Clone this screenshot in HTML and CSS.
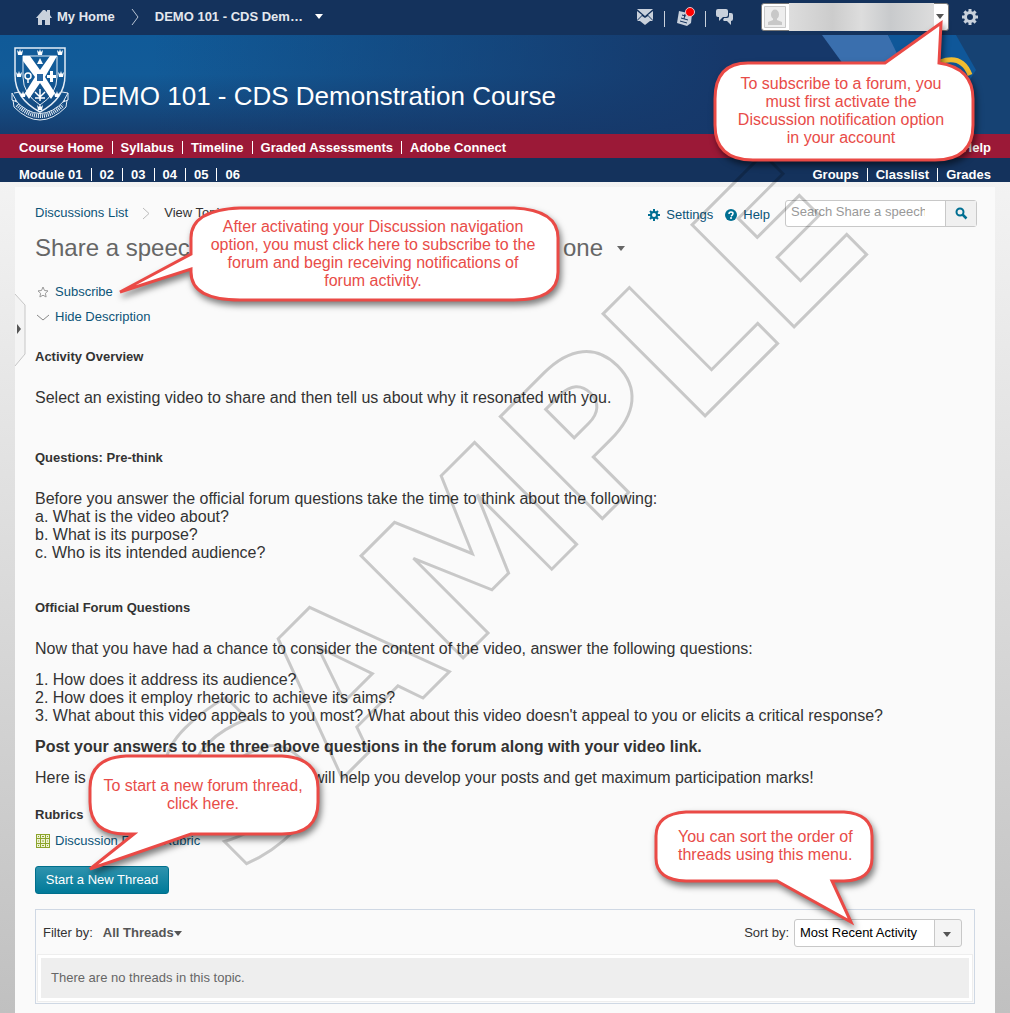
FILE: index.html
```html
<!DOCTYPE html>
<html lang="en">
<head>
<meta charset="utf-8">
<meta name="viewport" content="width=device-width, initial-scale=1">
<title>DEMO 101 - CDS Demonstration Course</title>
<link rel="stylesheet" href="styles.css">
</head>
<body>
<header>
  <div class="minibar">
    <nav class="crumbs" aria-label="Site">
      <a class="home" href="#"><svg width="16" height="16" viewBox="0 0 16 16"><path fill="#c9d1dc" d="M0 9 7 1h2l2 2V1h3v5l2 3h-2v7H9v-5H6v5H2V9z"/></svg>My Home</a>
      <svg width="8" height="18" viewBox="0 0 8 18"><path d="M1 1l6 8-6 8" fill="none" stroke="#b9c4d3"/></svg>
      <button class="course-pick" type="button">DEMO 101 - CDS Dem…<i class="caret"></i></button>
    </nav>
    <div class="tools">
      <button type="button" aria-label="Messages"><svg width="18" height="18" viewBox="0 0 18 18"><path fill="#c9d1dc" d="M1 1h16L9 8zM1 3l5 4-5 5zM17 3l-5 4 5 5zM9 10l3-2 5 5h-3l-5 4-5-4H1l5-5z"/></svg></button>
      <span class="bar"></span>
      <button type="button" aria-label="Updates"><svg width="20" height="20" viewBox="0 0 20 20"><path fill="#c9d1dc" d="M4 4l13 3-1 9-4 3-10-3z"/><path d="M6 11l7 2M5 14l7 2M7 8l4 1M10 7l-1 5" stroke="#14325c" fill="none"/><circle cx="15" cy="5" r="4.500" fill="#f00" stroke="#e8c8d0"/></svg></button>
      <span class="bar"></span>
      <button type="button" aria-label="Chat"><svg width="18" height="16" viewBox="0 0 18 16"><path fill="#c9d1dc" d="M2 0h8q2 0 2 2v4q0 2-2 2H7l-4 4V8H2Q0 8 0 6V2q0-2 2-2zM13 4h2q2 0 2 2v4q0 2-2 2v4l-4-4H8l-1-1 1-2h3q2 0 2-2z"/></svg></button>
      <button class="account" type="button" aria-label="Account">
        <svg width="22" height="22" viewBox="0 0 22 22"><path d="M.5.5h21v21H.5z" fill="#eee" stroke="#c8c8c8"/><ellipse cx="11" cy="8.500" rx="4" ry="5" fill="#c8c8c8"/><path d="M9 12h4v2l5 2v3H4v-3l5-2z" fill="#c8c8c8"/></svg>
        <span class="account-name"></span><i class="caret"></i>
      </button>
      <button type="button" aria-label="Settings"><svg width="16" height="16" viewBox="-8 -8 16 16"><g stroke="#c9d1dc" stroke-width="3"><path d="M0-8V8M-8 0H8M-5.600-5.600 5.600 5.600M-5.600 5.600 5.600-5.600"/></g><circle r="4.500" fill="#14325c" stroke="#c9d1dc" stroke-width="3"/></svg></button>
    </div>
  </div>
  <div class="banner">
    <svg class="banner-art" width="260" height="99" viewBox="0 0 260 99" aria-hidden="true"><path d="M200 0h60v99h-60z" fill="#164273"/><path d="M72 0h66l60 99h-54z" fill="#3a6fae"/><path d="M138 0h68l20 35-40 64z" fill="#0f5799"/><path d="M190 27q22-8 30 13" fill="none" stroke="#f2bd30" stroke-width="5"/></svg>
    <svg class="crest" width="58" height="74" viewBox="0 0 58 74" aria-label="Crest">
      <g fill="none" stroke="#e4edf6"><path d="M4 1h50v27q0 24-25 37Q4 52 4 28z" stroke-width="1.500"/><path d="M12 9h34v21q0 17-17 28Q12 47 12 30z"/><path d="M3 46l6-1M1 46l5 9-5-2zM57 46l-6-1M57 46l-5 9 5-2z"/><path d="M4 53q25 27 50 0M3 60q26 26 52 0l1-7M3 60l-1-7"/><path d="M6 58q23 22 46 0" stroke-width="4" stroke-dasharray="1 1"/></g>
      <path d="M12 9h7l10 14L39 9h7L34 30l10 16-4 6-11-16-11 16-4-6 10-16L12 14z" fill="#fff"/>
      <path d="M26 27h6v7h-6z" fill="#2a68a3"/>
      <path fill="#fff" d="M6 3l2 2 1-3 1 3 2-2-1 5H7zM26 3l2 2 1-3 1 3 2-2-1 5h-4zM46 3l2 2 1-3 1 3 2-2-1 5h-4zM5 25l2 2 1-3 1 3 2-2-1 5H6zM47 25l2 2 1-3 1 3 2-2-1 5h-4zM26 58l2 2 1-3 1 3 2-2-1 5h-4zM9 45l2 2 1-3 1 3 2-2-1 5h-4zM43 45l2 2 1-3 1 3 2-2-1 5h-4zM29 11l3 6h-6zM39 24h3v4h3v3h-3v4h-3v-4h-3v-3h3z"/>
      <g fill="none" stroke="#fff" stroke-width="1.500"><circle cx="17" cy="29" r="3"/><path d="M29 42v12M24 45l5 5 5-5M24 51h10M17 32v4"/></g>
    </svg>
    <span class="course-name">DEMO 101 - CDS Demonstration Course</span>
  </div>
  <nav class="navrow red" aria-label="Course">
    <ul><li><a href="#">Course Home</a></li><li><a href="#">Syllabus</a></li><li><a href="#">Timeline</a></li><li><a href="#">Graded Assessments</a></li><li><a href="#">Adobe Connect</a></li></ul>
    <ul><li><a href="#">Help</a></li></ul>
  </nav>
  <nav class="navrow navy" aria-label="Modules">
    <ul><li><a href="#">Module 01</a></li><li><a href="#">02</a></li><li><a href="#">03</a></li><li><a href="#">04</a></li><li><a href="#">05</a></li><li><a href="#">06</a></li></ul>
    <ul><li><a href="#">Groups</a></li><li><a href="#">Classlist</a></li><li><a href="#">Grades</a></li></ul>
  </nav>
</header>

<main>
  <button class="drawer" type="button" aria-label="Open panel"><svg width="12" height="74" viewBox="0 0 12 74"><path d="M0 1l10 11v49L0 73" fill="#f4f4f4" stroke="#c6c6c6"/><path d="M2 31l4 5-4 5z" fill="#555"/></svg></button>
  <div class="topline">
    <nav class="trail" aria-label="Breadcrumb"><a href="#">Discussions List</a><svg width="8" height="13" viewBox="0 0 8 13"><path d="M1 1l6 5.500L1 12" fill="none" stroke="#bbb"/></svg><span>View Topic</span></nav>
    <div class="page-tools">
      <a href="#"><svg width="12" height="12" viewBox="-6 -6 12 12"><path d="M0-6V6M-6 0H6M-4-4 4 4M-4 4 4-4" stroke="#006f92" stroke-width="2"/><circle r="3" fill="#fafafa" stroke="#006f92" stroke-width="2"/></svg>Settings</a>
      <a href="#"><svg width="12" height="12" viewBox="0 0 12 12"><circle cx="6" cy="6" r="6" fill="#006f92"/><path d="M4 5q0-2 2-2t2 1.500Q8 6 6 7M6 8v2" fill="none" stroke="#fff" stroke-width="1.500"/></svg>Help</a>
      <form class="search"><input type="text" aria-label="Search" placeholder="Search Share a speech"><button type="button" aria-label="Search"><svg width="12" height="12" viewBox="0 0 12 12"><circle cx="5" cy="5" r="3.500" fill="none" stroke="#006f92" stroke-width="2"/><path d="M7.500 7.500l4 4" stroke="#006f92" stroke-width="2.500"/></svg></button></form>
    </div>
  </div>
  <h1><span class="title">Share a speech</span><span>one</span><i class="caret"></i></h1>
  <ul class="actions">
    <li><svg width="12" height="12" viewBox="0 0 12 12"><path d="M6 1l1.500 3.500 3.500.4-2.600 2.400.7 3.700L6 9.200 2.900 11l.7-3.700L1 4.900l3.500-.4z" fill="none" stroke="#999"/></svg><a href="#">Subscribe</a></li>
    <li><svg width="12" height="12" viewBox="0 0 12 12"><path d="M0 4l6 5 6-5" fill="none" stroke="#888"/></svg><a href="#">Hide Description</a></li>
  </ul>

  <section class="description">
    <h2>Activity Overview</h2>
    <p class="wide">Select an existing video to share and then tell us about why it resonated with you.</p>
    <h2>Questions: Pre-think</h2>
    <p class="list">Before you answer the official forum questions take the time to think about the following:<br>a. What is the video about?<br>b. What is its purpose?<br>c. Who is its intended audience?</p>
    <h2>Official Forum Questions</h2>
    <p>Now that you have had a chance to consider the content of the video, answer the following questions:</p>
    <p>1. How does it address its audience?<br>2. How does it employ rhetoric to achieve its aims?<br>3. What about this video appeals to you most? What about this video doesn't appeal to you or elicits a critical response?</p>
    <p><strong>Post your answers to the three above questions in the forum along with your video link.</strong></p>
    <p class="tip"><span class="tip-start">Here is</span><span>will help you develop your posts and get maximum participation marks!</span></p>
  </section>
  <h2>Rubrics</h2>
  <p class="rubric"><svg width="14" height="14" viewBox="0 0 14 14"><path fill="#8ca42c" d="M0 0h14v14H0z"/><path fill="#eef2d6" d="M1 1h3v3H1zM5 1h4v3H5zM10 1h3v3h-3zM1 5h3v4H1zM5 5h4v4H5zM10 5h3v4h-3zM1 10h3v3H1zM5 10h4v3H5zM10 10h3v3h-3z"/><path stroke="#8ca42c" d="M2 2.500h1M6 2.500h2M11 2.500h1M2 7h1M6 7h2M11 7h1M2 11.500h1M6 11.500h2M11 11.500h1"/></svg><a href="#">Discussion Forum Rubric</a></p>
  <button class="primary" type="button">Start a New Thread</button>

  <section class="threads">
    <div class="filters">
      <div class="filter"><span>Filter by:</span><button type="button">All Threads<i class="caret"></i></button></div>
      <div class="sort"><label for="sort">Sort by:</label><span class="picker"><select id="sort"><option>Most Recent Activity</option></select><i class="caret"></i></span></div>
    </div>
    <p class="empty">There are no threads in this topic.</p>
  </section>
</main>

<svg class="watermark" width="780" height="920" viewBox="0 0 780 920" aria-hidden="true"><text transform="translate(121 880) rotate(-45)">SAMPLE</text></svg>

<aside class="callout c-account">
  <svg width="264" height="146" viewBox="0 0 264 146"><path d="M35 41H172L228 1L226 41Q260 46 260 77V103Q260 138 222 138H40Q2 138 2 103V77Q2 41 35 41z"/></svg>
  <p>To subscribe to a forum, you<br>must first activate the<br>Discussion notification option<br>in your account</p>
</aside>
<aside class="callout c-subscribe">
  <svg width="450" height="104" viewBox="0 0 450 104"><path d="M122 2H396Q440 4 440 32V66Q440 94 396 94H122Q73 94 73 66V63L2 86 73 48V32Q73 4 122 2z"/></svg>
  <p>After activating your Discussion navigation<br>option, you must click here to subscribe to the<br>forum and begin receiving notifications of<br>forum activity.</p>
</aside>
<aside class="callout c-start">
  <svg width="240" height="126" viewBox="0 0 240 126"><path d="M38 1H194Q230 3 230 33V47Q230 79 194 79H103L2 114 46 79H38Q2 79 2 47V33Q2 3 38 1z"/></svg>
  <p>To start a new forum thread,<br>click here.</p>
</aside>
<aside class="callout c-sort">
  <svg width="228" height="124" viewBox="0 0 228 124"><path d="M32 2H190Q218 4 218 26V48Q218 70 190 71H178L197 112 123 71H32Q2 70 2 48V26Q2 4 32 2z"/></svg>
  <p>You can sort the order of<br>threads using this menu.</p>
</aside>
</body>
</html>
```
FILE: styles.css
```css
* { box-sizing: border-box; }
body {
  position: relative;
  min-height: 100vh;
  margin: 0;
  display: flex;
  flex-direction: column;
  overflow-x: hidden;
  background: linear-gradient(#f3f3f3 180px, #c0c0c0);
  color: #333;
  font: 13px/18px "Liberation Sans", Arial, sans-serif;
}
a { color: #0c5478; text-decoration: none; }
button { margin: 0; padding: 0; border: 0; background: none; color: inherit; font: inherit; }
svg { flex: none; display: block; overflow: visible; }
ul { margin: 0; padding: 0; list-style: none; }
p { margin: 0; }
.caret { display: inline-block; border: 4px solid transparent; border-top: 5px solid currentColor; border-bottom: 0; }

.minibar {
  display: flex;
  justify-content: space-between;
  height: 35px;
  padding: 0 32px 2px 36px;
  background: #14325c;
  color: #e4e8ee;
  font-weight: bold;
}
.minibar a { color: inherit; }
.crumbs, .home, .course-pick, .tools, .account { display: flex; align-items: center; }
.crumbs { gap: 16px; }
.home { gap: 5px; }
.course-pick { gap: 12px; }
.course-pick .caret { color: #fff; }
.tools { gap: 10px; }
.bar { width: 1px; height: 16px; margin-top: 4px; background: #c9d1dc; }
.account {
  width: 188px;
  height: 28px;
  margin: 0 3px 0 17px;
  padding: 0 4px 0 2px;
  border: 1px solid #777;
  border-radius: 3px;
  background: #fff;
  color: #555;
}
.account-name { flex: 1; height: 28px; margin: 0 2px 0 3px; background: linear-gradient(90deg, #ddd, #ccc 30%, #ddd 50%, #c8cacc 70%, #ddd); }

.banner {
  position: relative;
  display: flex;
  gap: 13px;
  height: 99px;
  padding: 12px 11px;
  overflow: hidden;
  background: linear-gradient(90deg, transparent 15%, #16386a 72%), linear-gradient(#105a98, #125b98 40%, #163d6e);
}
.banner-art { position: absolute; top: 0; right: 0; width: 260px; }
.course-name { margin-top: 34px; color: #fff; font-size: 26px; line-height: 30px; }

.navrow { display: flex; justify-content: space-between; height: 24px; padding: 0 19px; font-weight: bold; }
.navrow ul { display: flex; align-items: center; }
.navrow li { padding-top: 4px; line-height: 16px; }
.navrow li + li::before { content: ""; display: inline-block; width: 1px; height: 13px; margin: 0 8px; background: #fff; vertical-align: -2px; }
.navrow a { color: #fff; }
.red { background: #9b1937; }
.navy { padding-top: 5px; background: #14325c; }

main { position: relative; flex: 1; margin: 5px 15px 0; padding: 12px 18px 10px 20px; background: #fafafa; }
.drawer { position: absolute; left: 0; top: 106px; }
.topline { display: flex; justify-content: space-between; }
.trail { display: flex; align-items: center; gap: 14px; height: 28px; }
.page-tools, .page-tools > a { display: flex; align-items: center; }
.page-tools { gap: 12px; }
.page-tools > a { gap: 6px; padding-top: 4px; }
.search { display: flex; width: 192px; height: 27px; margin-left: 3px; border: 1px solid #c8c8c8; border-radius: 3px; background: #fff; }
.search input { flex: 1; min-width: 0; padding: 0 20px 2px 5px; border: 0; background: none; font: inherit; }
.search input::placeholder { color: #999; opacity: 1; }
.search button { display: grid; place-items: center; width: 31px; border-left: 1px solid #c8c8c8; background: #f0f0f0; }

h1 { display: flex; align-items: center; margin: 7px 0 0; color: #666; font-size: 24px; font-weight: normal; line-height: 28px; }
.title { width: 528px; }
h1 .caret { margin-left: 14px; }
.actions { margin: 17px 0 19px; }
.actions li { display: flex; align-items: center; gap: 6px; height: 25px; padding-left: 2px; }

h2 { margin: 0; font-size: 13px; line-height: 18px; }
.description { font-size: 16px; }
.description p { margin-bottom: 13px; }
.description h2 + p { margin-top: 23px; }
.description .wide { margin-bottom: 42px; }
.description .list { margin-bottom: 37px; }
.description .tip { display: flex; margin-bottom: 19px; }
.tip-start { width: 278px; }
.rubric { display: flex; align-items: center; gap: 6px; margin: 8px 0 16px; }
.primary {
  width: 134px;
  height: 28px;
  border: 1px solid #006f8c;
  border-radius: 3px;
  background: linear-gradient(#2f93ae, #007a99);
  color: #fff;
}

.rubric { padding-left: 1px; gap: 5px; }
.threads { margin: 15px 2px 0 0; border: 1px solid #cfd8e4; }
.filters, .filter, .sort { display: flex; align-items: center; }
.filters { justify-content: space-between; height: 45px; padding: 0 12px 0 7px; }
.filter { gap: 10px; }
.filter button { color: #555; font-weight: bold; }
.filter .caret { vertical-align: 1px; }
.sort { gap: 5px; }
.picker { position: relative; width: 168px; height: 28px; border: 1px solid #c8c8c8; border-radius: 3px; background: linear-gradient(90deg, #fff 139px, #c8c8c8 139px, #c8c8c8 140px, #f4f4f4 140px); }
.picker select { width: 100%; height: 26px; padding: 0 0 0 5px; border: 0; appearance: none; background: none; color: #000; font: inherit; }
.picker .caret { position: absolute; right: 10px; top: 12px; color: #555; }
.empty { margin: 0 2px 2px; padding: 11px 10px; border: 3px solid #fff; outline: 1px solid #eee; background: #eee; color: #666; }

.watermark { position: absolute; top: 0; left: 120px; pointer-events: none; }
.watermark text { fill: none; stroke: rgba(0, 0, 0, 0.2); stroke-width: 3px; font: bold 198px "DejaVu Sans", sans-serif; }

.callout { position: absolute; color: #e84c48; font-size: 16px; line-height: 18px; text-align: center; }
.callout path { fill: #fff; stroke: #ea4a46; stroke-width: 3px; }
.callout svg { filter: drop-shadow(2px 4px 3px rgba(0, 0, 0, 0.5)); }
.callout p { position: absolute; inset: 0; }
.c-account { top: 22px; right: 33px; }
.c-account p { padding: 53px 8px 0 0; }
.c-subscribe { top: 206px; left: 118px; }
.c-subscribe p { padding: 12px 0 0 60px; }
.c-start { top: 755px; left: 88px; }
.c-start p { padding: 22px 10px 0 0; }
.c-sort { top: 810px; right: 128px; }
.c-sort p { padding: 18px 0 0 24px; text-align: left; }
```
